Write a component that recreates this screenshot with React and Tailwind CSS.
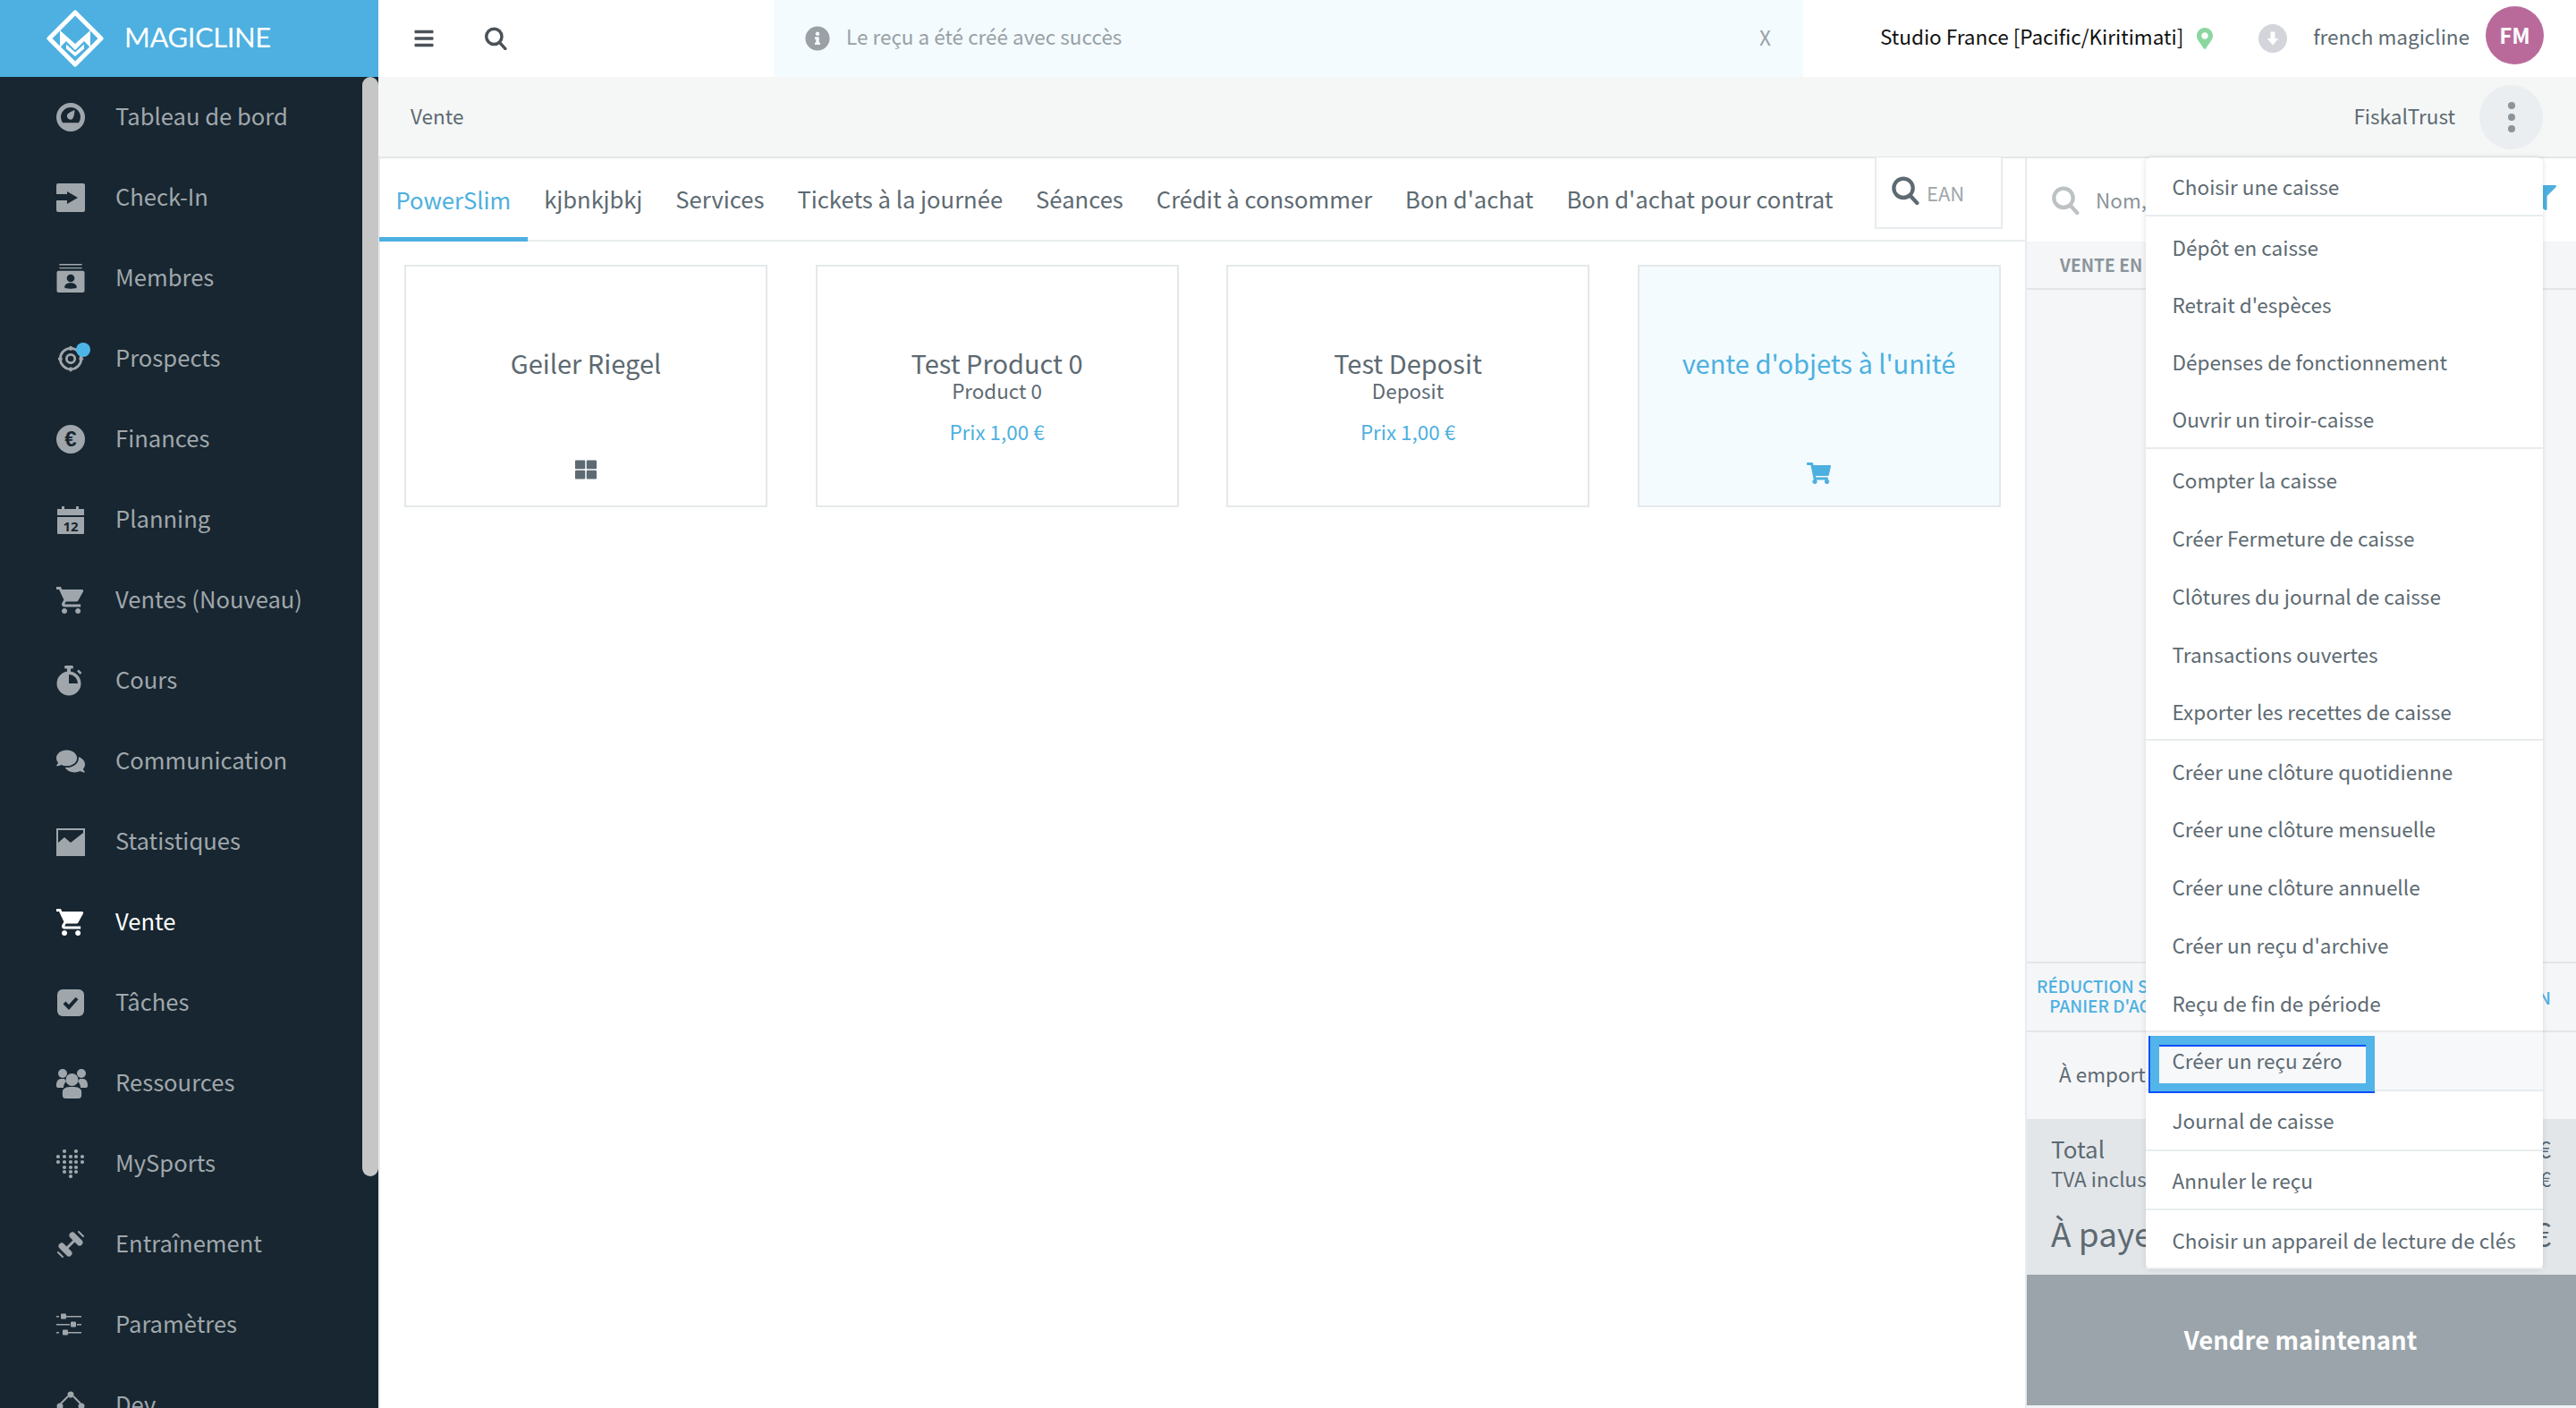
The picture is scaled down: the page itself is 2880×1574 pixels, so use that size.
import React from "react";
import { FaComments, FaThLarge, FaMapMarkerAlt, FaInfoCircle, FaBars, FaFilter, FaShoppingCart } from "react-icons/fa";

const CART = "M7 18c-1.1 0-1.99.9-1.99 2S5.9 22 7 22s2-.9 2-2-.9-2-2-2zM1 2v2h2l3.6 7.59-1.35 2.45c-.16.28-.25.61-.25.96 0 1.1.9 2 2 2h12v-2H7.42c-.14 0-.25-.11-.25-.25l.03-.12.9-1.63h7.45c.75 0 1.41-.41 1.75-1.03l3.58-6.49c.08-.14.12-.31.12-.48 0-.55-.45-1-1-1H5.21l-.94-2H1zm16 16c-1.1 0-1.99.9-1.99 2s.89 2 1.99 2 2-.9 2-2-.9-2-2-2z";

function Cart({ className }) {
  return <svg viewBox="1 2 21.2 20" className={className} fill="currentColor"><path d={CART} /></svg>;
}
function Mag({ className, w = 3.2 }) {
  return (
    <svg viewBox="0 0 24 24" className={className} fill="none" stroke="currentColor" strokeWidth={w} strokeLinecap="round">
      <circle cx="10.5" cy="10" r="8" />
      <path d="M16.5 16.5 L22 22.5" />
    </svg>
  );
}
const I = "w-8 h-8";
const icons = {
  dash: (
    <svg viewBox="0 0 32 32" className={I} fill="currentColor">
      <path fillRule="evenodd" d="M16 0a16 16 0 1 0 0 32a16 16 0 0 0 0-32zM16 5a11 11 0 0 1 11 11a11 11 0 0 1-2 6.2l-18-0a11 11 0 0 1-2-6.2a11 11 0 0 1 11-11z" />
      <path d="M20.500 8.500 C20 13 19.500 16 18 18a4 4 0 0 1-6-4.500c1-2 5-4 8.500-5.500z" />
    </svg>
  ),
  check: (
    <svg viewBox="0 0 32 32" className={I} fill="currentColor">
      <path fillRule="evenodd" d="M2 0h28a2 2 0 0 1 2 2v28a2 2 0 0 1-2 2H2a2 2 0 0 1-2-2V2a2 2 0 0 1 2-2zM0 12H12V9L24 16L12 23V19H0Z" />
    </svg>
  ),
  members: (
    <svg viewBox="0 0 32 33" className={I} fill="currentColor">
      <path fillRule="evenodd" d="M3 0h26v1.500H3zM3 4h26v1.500H3zM2 8h28a2 2 0 0 1 2 2v21a2 2 0 0 1-2 2H2a2 2 0 0 1-2-2V10a2 2 0 0 1 2-2zM16 12a4.500 4.500 0 1 0 0 9a4.500 4.500 0 0 0 0-9zM9 27c0 2 14 2 14 0c0-3-3-5-7-5s-7 2-7 5z" />
    </svg>
  ),
  prospects: (
    <span className="relative block w-8 h-8">
      <svg viewBox="0 0 32 32" className="w-[30px] h-[30px] mt-0.5 ml-0.5" fill="none" stroke="currentColor">
        <circle cx="15" cy="15" r="12.500" strokeWidth="3" />
        <circle cx="15" cy="15" r="5" strokeWidth="3" />
        <path d="M15 0v5M15 25v5M0 15h5M25 15h5" strokeWidth="3" />
      </svg>
      <span className="absolute left-[22px] -top-[2px] w-4 h-4 rounded-full bg-[#4db5e6]" />
    </span>
  ),
  euro: (
    <svg viewBox="0 0 32 32" className={I}>
      <circle cx="16" cy="16" r="16" fill="currentColor" />
      <text x="16" y="24" textAnchor="middle" fontSize="24" fontWeight="700" fontFamily="Liberation Sans, sans-serif" fill="#172630">€</text>
    </svg>
  ),
  calendar: (
    <svg viewBox="0 0 32 32" className={I} fill="currentColor">
      <path d="M1 4h5V1h3v3h13V1h3v3h6v7H1zM1 13h30v18a1 1 0 0 1-1 1H2a1 1 0 0 1-1-1z" />
      <text x="16" y="28.500" textAnchor="middle" fontSize="15" fontWeight="700" fontFamily="Open Sans, sans-serif" fill="#172630">12</text>
    </svg>
  ),
  cart: <Cart className={I} />,
  timer: (
    <svg viewBox="0 0 32 34" className="w-8 h-[34px]" fill="currentColor">
      <rect x="9" y="0" width="10" height="3.500" rx="1.500" />
      <rect x="12" y="3" width="4" height="4" />
      <circle cx="14" cy="20" r="13.500" />
      <path d="M14 20V10a10 10 0 0 1 10 10z" fill="#172630" />
      <path d="M24 5.500l3.500 3.500" stroke="currentColor" strokeWidth="2.500" />
    </svg>
  ),
  comments: <FaComments className="w-8 h-8" />,
  stats: (
    <svg viewBox="0 0 32 32" className={I} fill="currentColor">
      <path fillRule="evenodd" d="M0 1h32v31H0zM2 3v14l7-6 7 6 14-11v-3z" />
    </svg>
  ),
  tasks: (
    <svg viewBox="0 0 32 32" className={I}>
      <rect x="1" y="1" width="30" height="30" rx="6" fill="currentColor" />
      <path d="M9 16l5 5 9-10" fill="none" stroke="#172630" strokeWidth="4" />
    </svg>
  ),
  res: (
    <svg viewBox="0 0 35 33" className="w-[35px] h-[33px]" fill="currentColor">
      <circle cx="7" cy="5" r="5" />
      <circle cx="28" cy="5" r="5" />
      <path d="M0 18c0-4 2-7 5-7h4l2 3c-2 2-3 4-3 7H2a2 2 0 0 1-2-2zM35 18c0-4-2-7-5-7h-4l-2 3c2 2 3 4 3 7h6a2 2 0 0 0 2-2z" />
      <circle cx="17.500" cy="12" r="7" />
      <path d="M5 26c0-5 5-6 12.500-6s12.500 1 12.500 6v3a4 4 0 0 1-4 4H9a4 4 0 0 1-4-4z" transform="translate(17.500 0) scale(0.85 1) translate(-17.500 0)" />
    </svg>
  ),
  sports: (
    <svg viewBox="0 0 32 32" className={I} fill="currentColor">
      {[[9,2],[22,2],[2,8],[9,8],[16,8],[22,8],[29,8],[2,14],[9,14],[16,14],[22,14],[29,14],[9,20],[16,20],[22,20],[9,25],[16,25],[22,25],[16,30]].map(([x, y], i) => (
        <circle key={i} cx={x} cy={y} r="2.100" />
      ))}
    </svg>
  ),
  dumbbell: (
    <svg viewBox="0 0 32 32" className={I} fill="none" stroke="currentColor" strokeLinecap="round">
      <path d="M10 22L22 10" strokeWidth="3" />
      <path d="M18 6L26 14" strokeWidth="7" />
      <path d="M25 2L30 7" strokeWidth="2" />
      <path d="M6 18L14 26" strokeWidth="7" />
      <path d="M2 25L7 30" strokeWidth="2" />
    </svg>
  ),
  sliders: (
    <svg viewBox="0 0 28 26" className="w-7 h-[26px]" fill="currentColor">
      <path d="M0 3h3v1.500H0zM6 3h22v1.500H6zM0 12h15v1.500H0zM23 12h5v1.500h-5zM0 21h3v1.500H0zM11 21h17v1.500H11z" />
      <rect x="5" y="0.500" width="6" height="6" rx="1" />
      <rect x="16" y="9.500" width="6" height="6" rx="1" />
      <rect x="7" y="18.500" width="6" height="6" rx="1" />
    </svg>
  ),
  dev: (
    <svg viewBox="0 0 32 32" className={I} fill="none" stroke="currentColor" strokeWidth="2">
      <circle cx="16" cy="4" r="3.500" fill="currentColor" stroke="none" />
      <circle cx="4" cy="17" r="3.500" fill="currentColor" stroke="none" />
      <circle cx="28" cy="17" r="3.500" fill="currentColor" stroke="none" />
      <path d="M13 6L5 14M19 6l8 8" />
    </svg>
  ),
};

const nav = [
  ["dash", "Tableau de bord"], ["check", "Check-In"], ["members", "Membres"], ["prospects", "Prospects"], ["euro", "Finances"],
  ["calendar", "Planning"], ["cart", "Ventes (Nouveau)"], ["timer", "Cours"], ["comments", "Communication"], ["stats", "Statistiques"],
  ["cart", "Vente", true], ["tasks", "Tâches"], ["res", "Ressources"], ["sports", "MySports"], ["dumbbell", "Entraînement"], ["sliders", "Paramètres"], ["dev", "Dev"],
];

const tabs = ["PowerSlim", "kjbnkjbkj", "Services", "Tickets à la journée", "Séances", "Crédit à consommer", "Bon d'achat", "Bon d'achat pour contrat"];

const menu = [
  { box: "h-[66px] pt-[1px]", row: "h-[64px]", items: ["Choisir une caisse"] },
  { box: "h-[260px] pt-[3px]", row: "h-[64px]", items: ["Dépôt en caisse", "Retrait d'espèces", "Dépenses de fonctionnement", "Ouvrir un tiroir-caisse"] },
  { box: "h-[326px] pt-[3px]", row: "h-[64.7px]", items: ["Compter la caisse", "Créer Fermeture de caisse", "Clôtures du journal de caisse", "Transactions ouvertes", "Exporter les recettes de caisse"] },
  { box: "h-[326px] pt-[2px]", row: "h-[64.8px]", items: ["Créer une clôture quotidienne", "Créer une clôture mensuelle", "Créer une clôture annuelle", "Créer un reçu d'archive", "Reçu de fin de période"] },
];
const menuEnd = ["Créer un reçu zéro", "Journal de caisse", "Annuler le reçu", "Choisir un appareil de lecture de clés"];

function Card({ title, sub, price, icon, blue }) {
  return (
    <div className={`h-[271px] border-2 border-[#e4e8ea] flex flex-col items-center pt-[89px] ${blue ? "bg-[#f3fbfe] text-[#4db0e0]" : "bg-white text-[#5d6a72]"}`}>
      <div className="text-[29px] leading-[36px]">{title}</div>
      {sub && <div className="text-[22.4px] leading-[26px]">{sub}</div>}
      {price && <div className="text-[22.4px] leading-[26px] mt-[20px] text-[#4db0e0]">{price}</div>}
      {icon && <div className="mt-auto pb-[28px]">{icon}</div>}
    </div>
  );
}

export default function App() {
  return (
    <div className="w-[2880px] h-[1574px] overflow-hidden flex bg-white font-['Noto_Sans_CJK_SC','Noto_Sans',sans-serif] text-[#5d6a72] whitespace-nowrap">
      {/* Sidebar */}
      <aside className="w-[423px] shrink-0 flex flex-col bg-[#172630] relative">
        <div className="h-[86px] shrink-0 bg-[#4db0e0] flex items-center pl-[52px] text-white">
          <svg viewBox="0 0 64 64" className="w-16 h-16 -mt-[1px]" fill="none" stroke="white">
            <path d="M32 3L61 32L32 61L3 32Z" strokeWidth="5" strokeLinejoin="round" />
            <path d="M15 23L32 38L49 23V42L42 35L32 45L22 35L15 42Z" fill="white" stroke="none" />
            <path d="M22 38.500L32 47.500L42 38.500V43.500L32 52L22 43.500Z" fill="white" stroke="none" />
            <path d="M10 32l5-5M54 32l-5-5" strokeWidth="0" />
          </svg>
          <span className="ml-[23px] text-[31px] tracking-[-0.4px] font-['Lato',sans-serif] -mt-[3px]">MAGICLINE</span>
        </div>
        <nav className="flex-1 overflow-hidden">
          {nav.map(([ic, label, active], i) => (
            <div key={i} className={`h-[90px] flex items-center pl-[63px] ${active ? "text-white" : "text-[#a0a7ac]"}`}>
              <span className="w-[66px] flex items-center">{icons[ic]}</span>
              <span className="text-[25.6px] -mt-[3px]">{label}</span>
            </div>
          ))}
        </nav>
        <div className="absolute left-[405px] top-[86px] w-[18px] h-[1229px] rounded-[9px] bg-[#c6c6c6]" />
      </aside>

      <div className="flex-1 flex flex-col min-w-0">
        {/* Top bar */}
        <header className="h-[86px] shrink-0 flex items-center bg-white">
          <div className="w-[442px] shrink-0 flex items-center pl-[39px] gap-[55px] text-[#4a5157]">
            <FaBars className="w-6 h-6" />
            <Mag className="w-[26px] h-[26px]" />
          </div>
          <div className="w-[1151px] h-full shrink-0 bg-[#f3fbfe] flex items-center pl-[35px] pr-[36px] text-[#9aa0a5]">
            <FaInfoCircle className="w-[28px] h-[28px]" />
            <span className="ml-[18px] text-[22.5px] -mt-[5px]">Le reçu a été créé avec succès</span>
            <span className="ml-auto text-[22.5px] -mt-[3px]">X</span>
          </div>
          <div className="flex-1 flex items-center pl-[86px]">
            <span className="text-[22.5px] text-[#111] -mt-[5px]">Studio France [Pacific/Kiritimati]</span>
            <FaMapMarkerAlt className="ml-[14px] w-[20px] h-[24px] text-[#8cd6a0]" />
            <span className="ml-[50px] w-8 h-8 rounded-full bg-[#d3d5da] flex items-center justify-center text-white">
              <svg viewBox="0 0 16 16" className="w-5 h-5" fill="currentColor"><path d="M6 2h4v6h3l-5 6-5-6h3z" /></svg>
            </span>
            <span className="ml-[29px] text-[22.5px] text-[#5d6a72] -mt-[5px]">french magicline</span>
            <span className="ml-[18px] w-[65px] h-[65px] -mt-[8px] rounded-full bg-[#b96a9b] text-white font-bold text-[24px] flex items-center justify-center">FM</span>
          </div>
        </header>

        {/* Sub header */}
        <div className="h-[91px] shrink-0 bg-[#f5f7f6] border-b-2 border-[#e2e7e9] flex items-center pl-[36px] pr-[37px]">
          <span className="text-[22.5px] -mt-[1px]">Vente</span>
          <span className="ml-auto text-[22.5px] -mt-[1px]">FiskalTrust</span>
          <span className="ml-[27px] w-[71px] h-[72px] rounded-full bg-[#ebeef0] flex flex-col items-center justify-center gap-[5px]">
            <i className="w-2 h-2 rounded-full bg-[#8b949a]" />
            <i className="w-2 h-2 rounded-full bg-[#8b949a]" />
            <i className="w-2 h-2 rounded-full bg-[#8b949a]" />
          </span>
        </div>

        {/* Content */}
        <div className="flex-1 flex relative min-h-0">
          <section className="w-[1843px] shrink-0 border-r-2 border-[#e8ecee] border-l-2 border-l-[#e8ecee]">
            <div className="h-[93px] flex border-b-2 border-[#e8ecee]">
              <div className="flex -ml-[1px]">
                {tabs.map((t, i) => (
                  <div key={t} className={`px-[18.5px] flex items-center text-[25.62px] pt-[4px] ${i === 0 ? "text-[#4db0e0] border-b-[5px] border-[#4db0e0] -mb-[2px]" : "border-b-[5px] border-transparent"}`}>{t}</div>
                ))}
              </div>
              <div className="absolute left-[1673px] top-[-1px] w-[143px] h-[80px] border-2 border-t-0 border-[#e8ecee] bg-white flex items-center pl-[16px]">
                <Mag className="w-8 h-8 text-[#5d6a72] -mt-[4px]" />
                <span className="ml-[8px] text-[22px] text-[#a0a6aa]">EAN</span>
              </div>
            </div>
            <div className="grid grid-cols-[406px_406px_406px_406px] gap-[53.5px] pl-[27px] pt-[26px]">
              <Card title="Geiler Riegel" icon={<FaThLarge className="w-6 h-6" />} />
              <Card title="Test Product 0" sub="Product 0" price="Prix 1,00 €" />
              <Card title="Test Deposit" sub="Deposit" price="Prix 1,00 €" />
              <Card blue title="vente d'objets à l'unité" icon={<FaShoppingCart className="w-[27px] h-[24px] -mb-[4px]" />} />
            </div>
          </section>

          <section className="flex-1 flex flex-col bg-[#f5f6f8]">
            <div className="h-[93px] bg-white flex items-center pl-[27px] pr-[22px] text-[#bcc1c4]">
              <Mag className="w-8 h-8" />
              <span className="ml-[18px] text-[22.5px] text-[#8b949a]">Nom,</span>
              <FaFilter className="ml-auto w-7 h-7 text-[#4db0e0] -mt-[6px]" />
            </div>
            <div className="h-[54px] flex items-center pl-[37px] border-b-2 border-[#e3e6e9] text-[19.2px] font-bold text-[#8b949a]">VENTE EN COURS</div>
            <div className="flex-1" />
            <div className="h-[79px] flex items-center justify-between pl-[11px] pr-[28px] border-y-2 border-[#e3e6e9] text-[19px] leading-[22px] font-medium text-[#4db0e0]">
              <div className="text-center -mt-[3px]">RÉDUCTION SUR LE<br />PANIER D'ACHAT</div>
              <div>BON DE RÉDUCTION</div>
            </div>
            <div className="h-[97px] flex items-center pl-[36px] text-[22.5px] pb-[3px]">À emporter</div>
            <div className="h-[174px] bg-[#e3e6e9] pl-[27px] pr-[28px] pt-[13px]">
              <div className="flex justify-between text-[26px] leading-[40px]"><span>Total</span><span>0,00 €</span></div>
              <div className="flex justify-between text-[22.5px] leading-[30px] mt-[-2px]"><span>TVA incluse</span><span>0,00 €</span></div>
              <div className="flex justify-between text-[37px] leading-[56px] mt-[18px]"><span>À payer</span><span>0,00 €</span></div>
            </div>
            <div className="h-[146px] bg-[#9aa4aa] flex items-center justify-center text-white font-bold text-[27.5px] pr-[2px]">Vendre maintenant</div>
            <div className="h-[3px] bg-[#f0f2f3]" />
          </section>

          {/* Dropdown menu */}
          <div className="absolute left-[1976px] top-[-1px] w-[444px] rounded-md bg-white shadow-[0_0_6px_rgba(0,0,0,0.12)] text-[22.5px] z-10">
            {menu.map((g, gi) => (
              <div key={gi} className={`border-b-2 border-[#e8ecee] overflow-hidden ${g.box}`}>
                {g.items.map((t) => (
                  <div key={t} className={`${g.row} flex items-center pl-[29.500px]`}>{t}</div>
                ))}
              </div>
            ))}
            {menuEnd.map((t, i) => (
              <div key={t} className={`h-[66.25px] flex items-center pl-[29.500px] border-b-2 border-[#e8ecee] relative ${i === 0 ? "bg-[#f7f8fa]" : ""}`}>
                <span className={`relative z-10 ${i >= 2 ? "mt-[3px]" : ""}`}>{t}</span>
                {i === 0 && (
                  <div className="absolute left-[3px] top-[4px] w-[253px] h-[64px] border-l-2 border-b-2 border-[#0b4fff]">
                    <div className="w-full h-full border-[10px] border-b-[9px] border-[#52b4e8]">
                      <div className="w-full h-full border-t-2 border-[#0b4fff]" />
                    </div>
                  </div>
                )}
              </div>
            ))}
          </div>
        </div>
      </div>
    </div>
  );
}
